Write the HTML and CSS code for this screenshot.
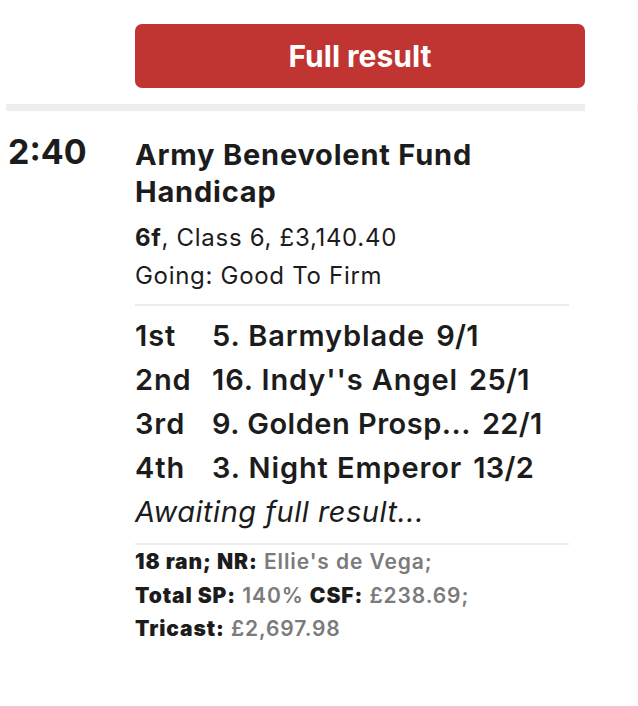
FILE: index.html
```html
<!DOCTYPE html>
<html lang="en">
<head>
  <meta charset="UTF-8" />
  <meta name="viewport" content="width=device-width, initial-scale=1.0" />
  <title>Results</title>
  <link rel="stylesheet" href="styles.css">
</head>
<body>
  <div class="board">
    <section class="meeting">
      <div class="actions">
        <a class="btn-result" href="#">Full result</a>
      </div>
      <div class="bar"></div>

      <!-- RACE -->
      <div class="race">
        <div class="race-time">2:40</div>
        <div class="race-info">
          <h3 class="race-title">Army Benevolent Fund Handicap</h3>
          <p class="race-meta"><strong>6f</strong>, Class 6, £3,140.40</p>
          <p class="race-meta">Going: Good To Firm</p>

          <ol class="runners">
            <li><span class="pos">1st</span><span class="horse">5. Barmyblade</span><span class="odds">9/1</span></li>
            <li><span class="pos">2nd</span><span class="horse">16. Indy''s Angel</span><span class="odds">25/1</span></li>
            <li><span class="pos">3rd</span><span class="horse long">9. Golden Prosp...</span><span class="odds">22/1</span></li>
            <li><span class="pos">4th</span><span class="horse">3. Night Emperor</span><span class="odds">13/2</span></li>
          </ol>
          <p class="awaiting">Awaiting full result...</p>

          <div class="race-footer">
            <p><b>18 ran; NR:</b> <span class="val">Ellie's de Vega;</span></p>
            <p><b>Total SP:</b> <span class="val">140%</span> <b>CSF:</b> <span class="val">£238.69;</span></p>
            <p><b>Tricast:</b> <span class="val">£2,697.98</span></p>
          </div>
        </div>
      </div>
    </section>

    <section class="meeting">
      <div class="actions"></div>
      <div class="bar"></div>
    </section>
  </div>
</body>
</html>
```

FILE: styles.css
```css
body {
  margin: 0;
  font-family: Inter, Lato, sans-serif;
  color: #1c1c1c;
  background: #fff;
  overflow: hidden;
}
.board {
  display: flex;
  gap: 46px;
}
.meeting {
  flex: 0 0 585px;
}
.actions {
  height: 88px;
  padding-left: 135px;
  padding-top: 24px;
  box-sizing: border-box;
}
.btn-result {
  display: flex;
  align-items: center;
  justify-content: center;
  width: 450px;
  height: 64px;
  background: #c03431;
  border-radius: 7px;
  color: #fff;
  text-decoration: none;
  font-weight: 700;
  font-size: 30px;
}
.bar {
  height: 7px;
  margin: 16px 0 0 6px;
  background: #eeeef0;
}
.race {
  display: flex;
  margin-top: 25px;
}
.race-time {
  flex: 0 0 135px;
  padding-left: 8px;
  box-sizing: border-box;
  font-size: 34px;
  font-weight: 700;
  line-height: 32px;
}
.race-info {
  width: 434px;
}
.race-title {
  margin: 0;
  font-size: 29px;
  line-height: 37px;
  font-weight: 700;
  letter-spacing: 0.8px;
}
.race-meta {
  margin: 0;
  font-size: 24px;
  line-height: 38px;
  letter-spacing: 0.7px;
}
.race-title + .race-meta {
  margin-top: 9px;
}
.runners {
  list-style: none;
  margin: 9px 0 0;
  padding: 8px 0 0;
  border-top: 2px solid #ececec;
}
.runners li {
  display: flex;
  font-size: 29px;
  line-height: 44px;
  font-weight: 600;
  letter-spacing: 0.9px;
  white-space: nowrap;
}
.pos {
  width: 77px;
}
.horse.long {
  letter-spacing: 0.5px;
}
.odds {
  margin-left: 11px;
  letter-spacing: 0.3px;
}
.awaiting {
  margin: 0;
  font-size: 29px;
  line-height: 44px;
  font-style: italic;
  letter-spacing: 0.5px;
}
.race-footer {
  margin-top: 9px;
  border-top: 2px solid #ececec;
}
.race-footer p {
  margin: 0;
  font-size: 21px;
  line-height: 33.5px;
  font-weight: 600;
  letter-spacing: 0.9px;
}
.val {
  color: #7b7b7b;
}
```
